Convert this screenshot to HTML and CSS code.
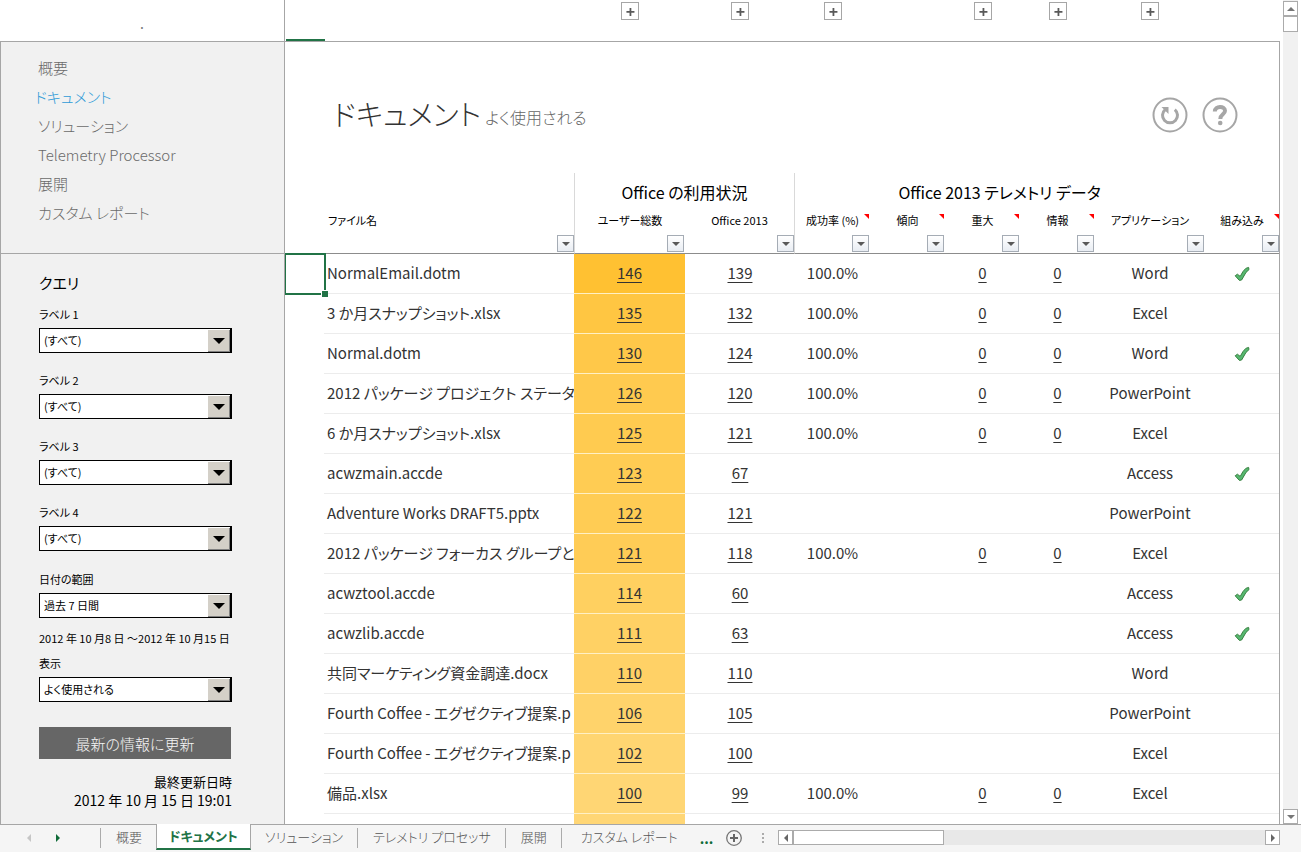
FILE: index.html
```html
<!DOCTYPE html>
<html lang="ja">
<head>
<meta charset="utf-8">
<title>ドキュメント</title>
<link rel="stylesheet" href="styles.css">
</head>
<body>
<svg class="defs" aria-hidden="true">
  <symbol id="check" viewBox="0 0 16 16"><path d="M1.200 9.800 3.400 8.200 6.200 10.400 9 5.500 11.800 2.400 14.600 1.400 15 3.600 12 6.400 7.600 14 5.400 14.400Z" fill="#56b870" stroke="#37803f" stroke-width="1" stroke-linejoin="round"/></symbol>
  <symbol id="plus" viewBox="0 0 18 18"><path d="M5 10h9M9.500 5.500v9" stroke="#595959" stroke-width="2"/></symbol>
</svg>
<div class="workbook">
  <div class="corner"><span>.</span></div>
  <div class="outline columns">
    <span class="selected-column"></span><span></span>
    <button class="expand" aria-label="列を展開"><svg><use href="#plus"/></svg></button>
    <button class="expand" aria-label="列を展開"><svg><use href="#plus"/></svg></button>
    <button class="expand" aria-label="列を展開"><svg><use href="#plus"/></svg></button>
    <span></span>
    <button class="expand" aria-label="列を展開"><svg><use href="#plus"/></svg></button>
    <button class="expand" aria-label="列を展開"><svg><use href="#plus"/></svg></button>
    <button class="expand" aria-label="列を展開"><svg><use href="#plus"/></svg></button>
  </div>
  <aside class="sidebar">
    <nav class="nav">
      <a href="#">概要</a>
      <a href="#" class="current">ドキュメント</a>
      <a href="#">ソリューション</a>
      <a href="#">Telemetry Processor</a>
      <a href="#">展開</a>
      <a href="#">カスタム レポート</a>
    </nav>
    <form class="query">
      <h2>クエリ</h2>
      <div class="field"><label for="l1">ラベル 1</label><span class="combo"><select id="l1"><option>(すべて)</option></select></span></div>
      <div class="field"><label for="l2">ラベル 2</label><span class="combo"><select id="l2"><option>(すべて)</option></select></span></div>
      <div class="field"><label for="l3">ラベル 3</label><span class="combo"><select id="l3"><option>(すべて)</option></select></span></div>
      <div class="field"><label for="l4">ラベル 4</label><span class="combo"><select id="l4"><option>(すべて)</option></select></span></div>
      <div class="field range"><label for="range">日付の範囲</label><span class="combo"><select id="range"><option>過去 7 日間</option></select></span></div>
      <p class="dates">2012 年 10 月8 日 ～2012 年 10 月15 日</p>
      <div class="field show"><label for="show">表示</label><span class="combo"><select id="show"><option>よく使用される</option></select></span></div>
      <button type="button" class="refresh">最新の情報に更新</button>
      <p class="updated">最終更新日時<time>2012 年 10 月 15 日 19:01</time></p>
    </form>
  </aside>
  <main class="sheet">
    <header class="title">
      <h1>ドキュメント<small>よく使用される</small></h1>
      <div class="actions">
        <button aria-label="更新"><svg viewBox="0 0 36 36"><circle cx="18" cy="18" r="16.500" fill="none" stroke="#a6a6a6" stroke-width="2"/><path d="M13.200 12.600A7.500 7.500 0 1 0 22.800 12.600" fill="none" stroke="#a6a6a6" stroke-width="3"/><path d="M9.500 10H16.500V17Z" fill="#a6a6a6"/></svg></button>
        <button aria-label="ヘルプ"><svg viewBox="0 0 36 36"><circle cx="18" cy="18" r="16.500" fill="none" stroke="#a6a6a6" stroke-width="2"/><path d="M12.800 14.500C13 8.500 23 8.500 23 13.800C23 17.500 18.300 17.200 18.300 22" fill="none" stroke="#a6a6a6" stroke-width="4"/><circle cx="18.200" cy="26" r="2.300" fill="#a6a6a6"/></svg></button>
      </div>
    </header>
    <table>
      <colgroup><col class="w-gutter"><col><col class="w-users"><col class="w-office"><col class="w-small"><col class="w-small"><col class="w-small"><col class="w-small"><col class="w-office"><col class="w-last"></colgroup>
      <thead>
        <tr class="groups"><td></td><td></td><th colspan="2" class="start end">Office の利用状況</th><th colspan="6" class="telemetry">Office 2013 テレメトリ データ</th></tr>
        <tr class="heads">
          <td></td>
          <th class="file">ファイル名<button class="filter" aria-label="フィルター"></button></th>
          <th class="start">ユーザー総数<button class="filter" aria-label="フィルター"></button></th>
          <th class="end">Office 2013<button class="filter" aria-label="フィルター"></button></th>
          <th class="note">成功率 (%)<button class="filter" aria-label="フィルター"></button></th>
          <th class="note">傾向<button class="filter" aria-label="フィルター"></button></th>
          <th class="note">重大<button class="filter" aria-label="フィルター"></button></th>
          <th class="note">情報<button class="filter" aria-label="フィルター"></button></th>
          <th>アプリケーション<button class="filter" aria-label="フィルター"></button></th>
          <th class="note last">組み込み<button class="filter" aria-label="フィルター"></button></th>
        </tr>
      </thead>
      <tbody id="rows"></tbody>
    </table>
  </main>
  <div class="vscroll"><button class="up" aria-label="上へ"></button><span class="thumb"></span><button class="down" aria-label="下へ"></button></div>
</div>
<footer class="tabbar">
  <div class="arrows"><button class="prev" aria-label="前のシート"></button><button class="next" aria-label="次のシート"></button></div>
  <nav class="tabs">
    <a href="#">概要</a><a href="#" class="active">ドキュメント</a><a href="#">ソリューション</a><a href="#">テレメトリ プロセッサ</a><a href="#">展開</a><a href="#" class="long">カスタム レポート</a>
  </nav>
  <button class="more">...</button>
  <button class="add" aria-label="新しいシート"><svg viewBox="0 0 16 16"><circle cx="8" cy="8" r="7.300" fill="none" stroke="#767676" stroke-width="1.300"/><path d="M4 8h8M8 4v8" stroke="#666" stroke-width="2"/></svg></button>
  <span class="grip"></span>
  <div class="hscroll"><button class="left" aria-label="左へ"></button><span class="thumb"></span><button class="right" aria-label="右へ"></button></div>
</footer>
<script src="script.js"></script>
</body>
</html>
```
FILE: styles.css
```css
* { box-sizing: border-box; }
body {
  margin: 0; height: 100vh; display: flex; flex-direction: column; overflow: hidden;
  font-family: "Noto Sans CJK JP", sans-serif; font-size: 14px; font-weight: 400; font-feature-settings: "palt";
  color: #333; background: #fff;
}
h1, h2, p { margin: 0; font-weight: inherit; }
a { color: inherit; text-decoration: none; }
button { font: inherit; color: inherit; padding: 0; border: 0; background: none; }
.defs { display: none; }

.workbook { flex: 1; min-height: 0; display: grid; grid-template: 42px minmax(0, 1fr) / 285px minmax(0, 1fr) 21px; }
.corner { border-right: 1px solid #a6a6a6; border-bottom: 1px solid #a6a6a6; text-align: center; line-height: 46px; font-size: 14px; color: #777; }
.columns { display: grid; grid-template-columns: 40px minmax(0, 1fr) 111px 110px 75px 75px 75px 75px 110px 75px; }
.outline { border-bottom: 1px solid #a6a6a6; justify-items: center; }
.outline .selected-column { justify-self: stretch; align-self: end; height: 2px; margin-left: 1px; background: #217346; }
.expand { width: 18px; height: 18px; margin-top: 2px; border: 1px solid #a6a6a6; background: #fff; }
.expand svg { display: block; width: 16px; height: 16px; }

.sidebar { grid-column: 1; background: #f1f1f1; border: solid #a6a6a6; border-width: 0 1px; overflow: hidden; color: #000; }
.nav { height: 212px; padding: 11px 0 0 37px; border-bottom: 1px solid #a6a6a6; color: #6a6a6a; display: flex; flex-direction: column; font-size: 15px; font-weight: 300; }
.nav a { line-height: 29px; }
.nav .current { color: #2f9bd8; margin-left: -3px; }
.query { width: 231px; padding: 17px 0 0 38px; font-size: 11px; }
.query h2 { font-size: 15px; line-height: 24px; }
.query label { display: block; line-height: 16px; }
.field { margin-top: 10px; height: 56px; }
.field:nth-of-type(1) { margin-top: 11px; }
.field label { margin-bottom: 6px; }
.combo { display: block; position: relative; width: 193px; height: 25px; }
select { appearance: none; width: 100%; height: 25px; padding: 0 28px 2px 4px; margin: 0; border: 1px solid #000; border-radius: 0; background: #fff; font: inherit; color: #000; font-feature-settings: inherit; }
.combo::before { content: ""; position: absolute; right: 1px; top: 1px; width: 23px; height: 23px; background: #d4d0c8; border: solid #000; border-width: 0 1px 1px 0; box-shadow: inset 1px 1px #fff, inset -1px -1px #808080; pointer-events: none; }
.combo::after { content: ""; position: absolute; right: 7px; top: 10px; border: 6px solid transparent; border-top-color: #000; border-bottom: 0; pointer-events: none; }
.field.range { margin-top: 11px; }
.field.show { margin-top: 8px; }
.dates { margin-top: 2px; line-height: 18px; white-space: nowrap; }
.refresh { width: 192px; height: 32px; margin-top: 16px; background: #666; color: #f5f5f5; font-size: 15px; font-weight: 300; }
.updated { margin-top: 14px; text-align: right; font-size: 13px; line-height: 18px; }
.updated time { display: block; font-size: 14px; }

.sheet { border-right: 1px solid #a6a6a6; overflow: hidden; }
.title { height: 131px; padding: 0 41px 0 48px; display: flex; align-items: center; justify-content: space-between; }
h1 { display: flex; align-items: center; gap: 4px; padding-top: 10px; font-size: 29px; font-weight: 300; }
h1 small { font-size: 16px; color: #666; padding-top: 8px; }
.actions { display: flex; gap: 14px; padding-top: 14px; }
.actions svg { display: block; width: 36px; height: 36px; }

table { width: 100%; table-layout: fixed; border-collapse: separate; border-spacing: 0; }
.w-gutter { width: 39px; } .w-users { width: 111px; } .w-office { width: 110px; } .w-small { width: 75px; } .w-last { width: 74px; }
td, th { padding: 0; font-weight: inherit; text-align: center; overflow: hidden; white-space: nowrap; }
.start { border-left: 1px solid #d9d9d9; }
.end { border-right: 1px solid #d9d9d9; }
.groups { height: 36px; font-size: 16px; color: #000; }
.groups th { padding-top: 2px; }
.groups .telemetry { padding-right: 75px; }
.heads { height: 45px; font-size: 11px; color: #000; }
.heads th, .heads td { position: relative; vertical-align: top; border-bottom: 1px solid #8c8c8c; padding-top: 3px; }
.heads .file { text-align: left; padding-left: 4px; }
.filter { position: absolute; right: 1px; bottom: 1px; width: 17px; height: 17px; border: 1px solid #a5acb5; background: linear-gradient(#fff, #e9edf3); }
.file .filter, .end .filter, .last .filter { right: 0; }
.filter::after { content: ""; position: absolute; left: 4px; top: 6px; border: 4px solid transparent; border-top-color: #595959; border-bottom: 0; }
.note::before { content: ""; position: absolute; right: 1px; top: 5px; border-top: 5px solid #f00; border-left: 5px solid transparent; }
.note.last::before { right: 0; }
tbody tr { height: 40px; font-size: 15px; }
tbody td { border-bottom: 1px solid #ececec; height: 40px; padding-bottom: 2px; }
tbody td:first-child { border: 0; }
tbody .name { text-align: left; padding-left: 3px; }
tbody .users { background: var(--heat); border-bottom-color: #fff0c4; }
tbody a { text-decoration: underline; text-underline-offset: 3px; }
tbody svg { display: block; width: 16px; height: 16px; margin: 2px auto 0; }
.picked { position: relative; overflow: visible; }
.picked::before { content: ""; position: absolute; inset: -1px -2px -1px -1px; border: 2px solid #217346; }
.picked::after { content: ""; position: absolute; right: -4px; bottom: -3px; width: 6px; height: 6px; background: #217346; border: solid #fff; border-width: 1px 0 0 1px; }

.vscroll { margin-left: 3px; width: 15px; grid-column: 3; grid-row: 1 / 3; background: #f1f1f1; display: flex; flex-direction: column; padding-top: 1px; }
.vscroll button, .vscroll .thumb, .hscroll button, .hscroll .thumb { border: 1px solid #ababab; background: #fff; display: grid; place-items: center; }
.vscroll button { height: 15px; }
.vscroll .thumb { height: 16px; }
.vscroll .down { margin-top: auto; }
.up::after, .down::after { content: ""; border: 4px solid transparent; }
.up::after { border-bottom-color: #777; border-top: 0; }
.down::after { border-top-color: #777; border-bottom: 0; }
.left::after, .right::after, .prev::after, .next::after { content: ""; display: block; border: 4px solid transparent; }
.left::after, .prev::after { border-right-color: #666; border-left: 0; }
.right::after, .next::after { border-left-color: #666; border-right: 0; }
.prev::after { border-right-color: #c6c6c6; }
.next::after { border-left-color: #0f6b38; }

.tabbar { flex: none; height: 28px; background: #f5f5f5; border-top: 1px solid #a6a6a6; display: flex; align-items: center; color: #555; padding: 0 21px 2px 0; }
.arrows { width: 100px; padding-left: 27px; display: flex; gap: 25px; }
.tabs { display: flex; align-self: stretch; font-size: 13px; font-weight: 300; }
.tabs a { line-height: 24px; padding: 0 14px 0 15px; position: relative; border-left: 1px solid transparent; white-space: nowrap; }
.tabs a::before { content: ""; position: absolute; left: -1px; top: 3px; height: 20px; border-left: 1px solid #ababab; }
.tabs .active { margin-top: -1px; padding: 0 12px; background: #fff; color: #217346; font-weight: 700; border-bottom: 2px solid #217346; border-right: 1px solid #a6a6a6; border-left-color: #a6a6a6; line-height: 24px; height: 26px; }
.tabs .active::before, .tabs .active + a::before { display: none; }
.tabs .active + a { padding-left: 13px; }
.tabs .long { padding-left: 19px; }
.more { margin-left: 8px; color: #0f6b38; font-weight: 700; }
.add { margin-left: 13px; }
.add svg { display: block; width: 16px; height: 16px; }
.grip { width: 2px; height: 10px; margin: 0 14px 0 20px; background: repeating-linear-gradient(#ababab 0 2px, transparent 2px 4px); }
.hscroll { flex: 1; height: 15px; background: #e8e8e8; display: flex; }
.hscroll button { width: 15px; }
.hscroll .thumb { width: 151px; }
.hscroll .right { margin-left: auto; }
```
FILE: script.js
```js
const rows = [
  ["NormalEmail.dotm", 146, 139, 1, "Word", 1],
  ["3 か月スナップショット.xlsx", 135, 132, 1, "Excel", 0],
  ["Normal.dotm", 130, 124, 1, "Word", 1],
  ["2012 パッケージ プロジェクト ステータ", 126, 120, 1, "PowerPoint", 0],
  ["6 か月スナップショット.xlsx", 125, 121, 1, "Excel", 0],
  ["acwzmain.accde", 123, 67, 0, "Access", 1],
  ["Adventure Works DRAFT5.pptx", 122, 121, 0, "PowerPoint", 0],
  ["2012 パッケージ フォーカス グループと", 121, 118, 1, "Excel", 0],
  ["acwztool.accde", 114, 60, 0, "Access", 1],
  ["acwzlib.accde", 111, 63, 0, "Access", 1],
  ["共同マーケティング資金調達.docx", 110, 110, 0, "Word", 0],
  ["Fourth Coffee - エグゼクティブ提案.p", 106, 105, 0, "PowerPoint", 0],
  ["Fourth Coffee - エグゼクティブ提案.p", 102, 100, 0, "Excel", 0],
  ["備品.xlsx", 100, 99, 1, "Excel", 0],
  ["", 99, 0, 0, "", 0]
];
const link = v => v === "" ? "" : `<a href="#">${v}</a>`;
document.getElementById("rows").innerHTML = rows.map(([name, users, office, tested, app, builtin], i) => {
  const t = (146 - users) / 46;
  const heat = `rgb(255, ${Math.round(193 + 21 * t)}, ${Math.round(50 + 66 * t)})`;
  return `<tr><td class="${i ? "" : "picked"}"></td><td class="name">${name}</td>
    <td class="users" style="--heat:${heat}">${name && link(users)}</td><td>${name && link(office)}</td>
    <td>${tested ? "100.0%" : ""}</td><td></td><td>${tested ? link(0) : ""}</td><td>${tested ? link(0) : ""}</td>
    <td>${app}</td><td>${builtin ? '<svg role="img" aria-label="組み込み"><use href="#check"/></svg>' : ""}</td></tr>`;
}).join("");
```
